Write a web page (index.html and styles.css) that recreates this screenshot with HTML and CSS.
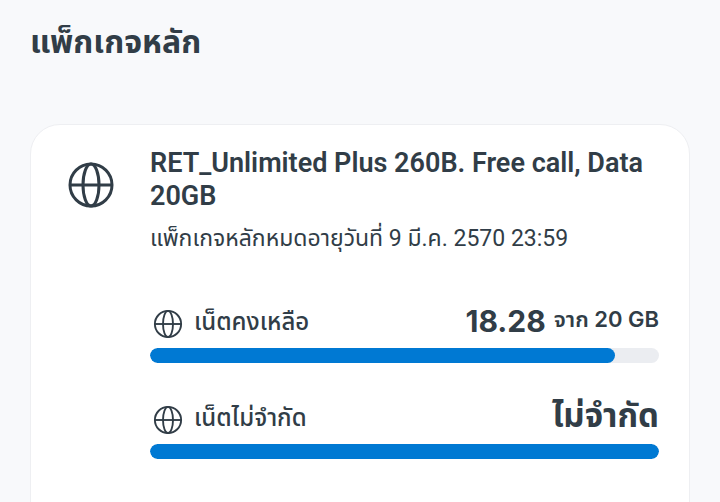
FILE: index.html
```html
<!DOCTYPE html>
<html lang="th">
    <head>
        <meta charset="UTF-8" />
        <meta name="viewport" content="width=device-width, initial-scale=1.0" />
        <title>แพ็กเกจหลัก</title>
        <link rel="stylesheet" href="styles.css">
    </head>

    <body>
        <svg class="sprite" aria-hidden="true">
            <symbol id="globe" viewBox="0 0 48 48">
                <circle cx="24" cy="24" r="21" />
                <ellipse cx="24" cy="24" rx="8" ry="21" />
                <path d="M3 24h42" />
            </symbol>
        </svg>

        <main class="container">
            <h1>แพ็กเกจหลัก</h1>

            <section class="card">
                <svg class="card__icon" aria-hidden="true"><use href="#globe" /></svg>

                <div class="card__body">
                    <h2>RET_Unlimited Plus 260B. Free call, Data 20GB</h2>
                    <p class="expiry">แพ็กเกจหลักหมดอายุวันที่ 9 มี.ค. 2570 23:59</p>

                    <div class="usage">
                        <div class="usage__row">
                            <svg class="usage__icon" aria-hidden="true"><use href="#globe" /></svg>
                            <span class="usage__label" id="data-left">เน็ตคงเหลือ</span>
                            <span class="usage__value">
                                <strong class="amount">18.28</strong>
                                <span class="total">จาก 20 GB</span>
                            </span>
                        </div>
                        <div class="bar" role="progressbar" aria-labelledby="data-left" aria-valuemin="0" aria-valuemax="20" aria-valuenow="18.28">
                            <div class="bar__fill" style="width: 91.4%"></div>
                        </div>
                    </div>

                    <div class="usage">
                        <div class="usage__row">
                            <svg class="usage__icon" aria-hidden="true"><use href="#globe" /></svg>
                            <span class="usage__label" id="data-unlimited">เน็ตไม่จำกัด</span>
                            <span class="usage__value">
                                <strong class="unlimited">ไม่จำกัด</strong>
                            </span>
                        </div>
                        <div class="bar" role="progressbar" aria-labelledby="data-unlimited" aria-valuemin="0" aria-valuemax="100" aria-valuenow="100">
                            <div class="bar__fill" style="width: 100%"></div>
                        </div>
                    </div>
                </div>
            </section>
        </main>
    </body>
</html>
```

FILE: styles.css
```css
html {
    box-sizing: border-box;
    font-size: 16px;
}

*,
*:before,
*:after {
    box-sizing: inherit;
}

body,
h1,
h2,
p {
    margin: 0;
    padding: 0;
}

body {
    background: #f8f9fb;
    color: #313d47;
    font-family: Inter, "Noto Sans Thai", "Noto Sans", sans-serif;
}

.sprite {
    display: none;
}

.container {
    padding: 20px 30px 0;
}

h1 {
    font-size: 32px;
    line-height: 44px;
    font-weight: bold;
}

.card {
    display: flex;
    align-items: flex-start;
    gap: 35px;
    margin-top: 60px;
    padding: 22px 30px 80px 36px;
    background: #fff;
    border: 1px solid #eeeff2;
    border-radius: 30px;
}

.card__icon,
.usage__icon {
    flex: none;
    fill: none;
    stroke: #313d47;
    stroke-width: 3px;
}

.card__icon {
    width: 48px;
    height: 48px;
    margin-top: 14px;
}

.card__body {
    flex: 1;
}

h2,
.expiry {
    font-family: Roboto, "Noto Sans Thai", "Noto Sans", sans-serif;
}

h2 {
    font-size: 27px;
    line-height: 33px;
    font-weight: 600;
}

.expiry {
    margin-top: 10px;
    font-size: 23px;
    line-height: 32px;
}

.usage {
    margin-top: 32px;
}

.expiry + .usage {
    margin-top: 44px;
}

.usage__row {
    display: flex;
    align-items: center;
    height: 49px;
}

.usage__icon {
    width: 30px;
    height: 30px;
    margin: 0 11px 0 3px;
}

.usage__label {
    padding-bottom: 2px;
    font-size: 24px;
    font-weight: 500;
}

.usage__value {
    display: flex;
    align-items: center;
    gap: 8px;
    margin-left: auto;
    padding-bottom: 6px;
}

.amount {
    font-size: 30px;
}

.total {
    font-size: 22px;
    font-weight: 600;
}

.unlimited {
    font-size: 33px;
}

.bar {
    height: 15px;
    background: #ebedf1;
    border-radius: 8px;
    overflow: hidden;
}

.bar__fill {
    height: 100%;
    background: #0079d3;
    border-radius: 8px;
}
```
